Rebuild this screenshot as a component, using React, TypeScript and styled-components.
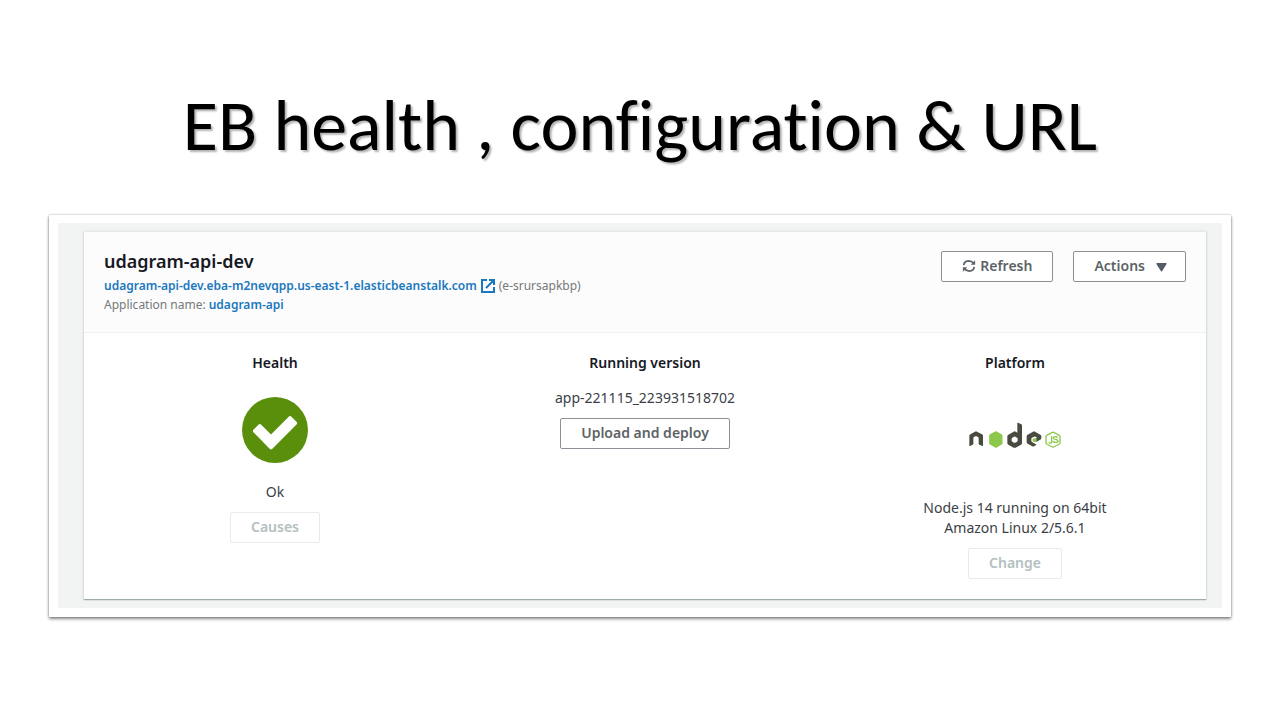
import React from "react";
import styled, { createGlobalStyle, css } from "styled-components";

const GlobalStyle = createGlobalStyle`
  *, *::before, *::after { box-sizing: border-box; }
  body {
    margin: 0;
    background: #ffffff;
    color: #16191f;
    font-family: "Noto Sans", "Open Sans", sans-serif;
    font-size: 14px;
    line-height: 20px;
  }
`;

const Slide = styled.main`
  min-height: 100vh;
  padding: 81px 49px 48px;
`;

const Title = styled.h1`
  margin: 0 0 46px;
  color: #000000;
  font-family: Carlito, Lato, sans-serif;
  font-size: 72px;
  font-variant-ligatures: none;
  font-weight: 400;
  line-height: 88px;
  text-align: center;
  text-shadow: 2px 2px 2px rgba(0, 0, 0, 0.3);
`;

const Frame = styled.section`
  padding: 8px 9px 9px;
  background: #ffffff;
  box-shadow: 0 0 2px rgba(0, 0, 0, 0.3), 0 2px 3px rgba(0, 0, 0, 0.45);
`;

const Backdrop = styled.div`
  padding: 9px 16px 9px 26px;
  background: #f2f4f4;
`;

const Card = styled.article`
  background: #ffffff;
  box-shadow: 0 1px 1px rgba(0, 28, 36, 0.3), 0 0 2px 1px rgba(0, 28, 36, 0.08);
`;

const CardHeader = styled.header`
  display: flex;
  justify-content: space-between;
  align-items: flex-start;
  padding: 19px 20px 18px;
  background: #fcfcfc;
  border-bottom: 1px solid #eff1f1;
`;

const EnvironmentName = styled.h2`
  margin: 0 0 5px;
  font-size: 18px;
  font-weight: 600;
  line-height: 20px;
`;

const Detail = styled.p`
  display: flex;
  align-items: center;
  gap: 3px;
  margin: 0;
  color: #74797b;
  font-size: 12px;
  line-height: 19px;
`;

const Link = styled.a`
  display: inline-flex;
  align-items: center;
  gap: 3px;
  color: #1a78be;
  font-weight: 600;
  text-decoration: none;
`;

const Actions = styled.div`
  display: flex;
  gap: 20px;
`;

const Button = styled.button<{ $menu?: boolean }>`
  display: inline-flex;
  align-items: center;
  justify-content: center;
  gap: 4px;
  height: 31px;
  padding: 0 20px 1px;
  background: #ffffff;
  border: 1px solid #8b9097;
  border-radius: 2px;
  color: #5c6367;
  font-family: inherit;
  font-size: 14px;
  font-weight: 600;
  line-height: 20px;
  white-space: nowrap;

  ${(p) =>
    p.$menu &&
    css`
      gap: 11px;
      padding-right: 18px;
    `}

  &:disabled {
    border-color: #e6ebeb;
    color: #b3bfc0;
  }
`;

const Columns = styled.div`
  display: grid;
  grid-template-columns: repeat(3, 1fr);
  padding: 20px 6px;
`;

const Column = styled.section`
  display: flex;
  flex-direction: column;
  align-items: center;
  text-align: center;
`;

const ColumnTitle = styled.h3`
  margin: 0 0 15px;
  font-size: 14px;
  font-weight: 600;
  line-height: 20px;
`;

const Value = styled.p`
  margin: 0 0 10px;
  max-width: 200px;
  color: #3b3f45;
`;

const Picture = styled.div<{ $tall?: boolean }>`
  display: flex;
  align-items: center;
  height: ${(p) => (p.$tall ? 110 : 94)}px;
  padding: ${(p) => (p.$tall ? "0 0 17px" : "9px 0 19px")};
`;

const ExternalIcon = () => (
  <svg width="16" height="16" viewBox="0 0 16 16" fill="none" stroke="currentColor" strokeWidth="2" aria-hidden="true">
    <path d="M7 2H2v12h12V9M9 2h5v5M14 2L6 10" />
  </svg>
);

const RefreshIcon = () => (
  <svg width="14" height="14" viewBox="0 0 16 16" fill="none" stroke="currentColor" strokeWidth="2" aria-hidden="true">
    <path d="M2 7q.6-4.600 5.500-4.800Q11 2.200 13.500 5M14 9q-.6 4.600-5.500 4.800Q5 13.800 2.500 11" />
    <path d="M15 1.500V6.500H10zM1 14.500V9.500H6z" fill="currentColor" stroke="none" />
  </svg>
);

const CaretIcon = () => (
  <svg width="11" height="11" viewBox="0 0 11 11" fill="#545b64" aria-hidden="true">
    <path d="M1 2h9q1 0 .6 1L6.200 10q-.7 1-1.400 0L.4 3Q0 2 1 2z" />
  </svg>
);

const HealthIcon = () => (
  <svg width="66" height="66" viewBox="0 0 66 66" role="img" aria-label="Healthy">
    <circle cx="33" cy="33" r="33" fill="#5a8f0c" />
    <path
      d="M11.600 32.600l4.800-4.800q1.400-1.400 2.800 0L29 37.500 46.700 19.800q1.400-1.400 2.800 0l5 5q1.400 1.400 0 2.800L30.400 51.700q-1.400 1.400-2.800 0L11.600 35.400q-1.400-1.400 0-2.800z"
      fill="#ffffff"
    />
  </svg>
);

const NodeLogo = () => (
  <svg width="92" height="26" viewBox="0 0 276 78" role="img" aria-label="Node.js">
    <g fill="#4a4b40">
      <path d="M1 42Q1 39 4 37L18 29q3-2 6 0l15 8q3 2 3 5v29q0 2-2 1l-9-4q-2-1-2-3V48q0-2-2-3l-4-2q-2-1-4 0l-4 2q-2 1-2 3v17q0 2-2 3l-8 4q-2 1-2-1z" />
      <path fillRule="evenodd" d="M145 4q0-3 2-2l10 5q2 1 2 3v54q0 3-3 4l-16 9q-3 1-6 0l-16-9q-3-2-3-5V43q0-3 3-5l16-9q3-2 6 0l5 3zM146 50q0-2-2-3l-5-3q-2-1-4 0l-5 3q-2 1-2 3v6q0 2 2 3l5 3q2 1 4 0l5-3q2-1 2-3z" />
      <path d="M217 51l-14 8-5-2 2-7 4-3-5-3q-2-1-4 0l-6 3q-2 1-2 3v7q0 2 2 3l14 8-8 5q-3 1-5 0l-14-8q-3-2-3-5V43q0-3 3-5l16-9q3-2 6 0l16 9q3 2 3 5v5q0 2-2 3z" />
    </g>
    <path d="M78 28.500q2.500-1.500 5 0l15 8q2.500 1.500 2.500 4.500v22q0 3-2.500 4.500l-15 9q-2.500 1.500-5 0l-15-9q-2.500-1.500-2.500-4.500V41q0-3 2.500-4.500z" fill="#8cc84b" />
    <path d="M197 48l6 3v7l-6 3-6-3v-7z" fill="#8cc84b" />
    <g fill="none" stroke="#8cc84b" strokeWidth="4">
      <path d="M250 31q2-1 4 0l17 9q2 1 2 4v18q0 3-2 4l-17 9q-2 1-4 0l-17-9q-2-1-2-4V44q0-3 2-4z" />
      <path d="M248 43v16q0 6-6 4l-3-2M266 47q-1-3-7-3-6 0-6 4 0 3 7 4 7 1 7 5t-7 4q-7 0-8-4" />
    </g>
  </svg>
);

export default function App() {
  return (
    <>
      <GlobalStyle />
      <Slide>
        <Title>EB health , configuration &amp; URL</Title>
        <Frame>
          <Backdrop>
            <Card>
              <CardHeader>
                <div>
                  <EnvironmentName>udagram-api-dev</EnvironmentName>
                  <Detail>
                    <Link href="#environment">
                      udagram-api-dev.eba-m2nevqpp.us-east-1.elasticbeanstalk.com
                      <ExternalIcon />
                    </Link>
                    <span>(e-srursapkbp)</span>
                  </Detail>
                  <Detail>
                    <span>Application name:</span>
                    <Link href="#application">udagram-api</Link>
                  </Detail>
                </div>
                <Actions>
                  <Button type="button">
                    <RefreshIcon />
                    Refresh
                  </Button>
                  <Button type="button" $menu>
                    Actions
                    <CaretIcon />
                  </Button>
                </Actions>
              </CardHeader>
              <Columns>
                <Column>
                  <ColumnTitle>Health</ColumnTitle>
                  <Picture>
                    <HealthIcon />
                  </Picture>
                  <Value>Ok</Value>
                  <Button type="button" disabled>Causes</Button>
                </Column>
                <Column>
                  <ColumnTitle>Running version</ColumnTitle>
                  <Value>app-221115_223931518702</Value>
                  <Button type="button">Upload and deploy</Button>
                </Column>
                <Column>
                  <ColumnTitle>Platform</ColumnTitle>
                  <Picture $tall>
                    <NodeLogo />
                  </Picture>
                  <Value>Node.js 14 running on 64bit Amazon Linux 2/5.6.1</Value>
                  <Button type="button" disabled>Change</Button>
                </Column>
              </Columns>
            </Card>
          </Backdrop>
        </Frame>
      </Slide>
    </>
  );
}
